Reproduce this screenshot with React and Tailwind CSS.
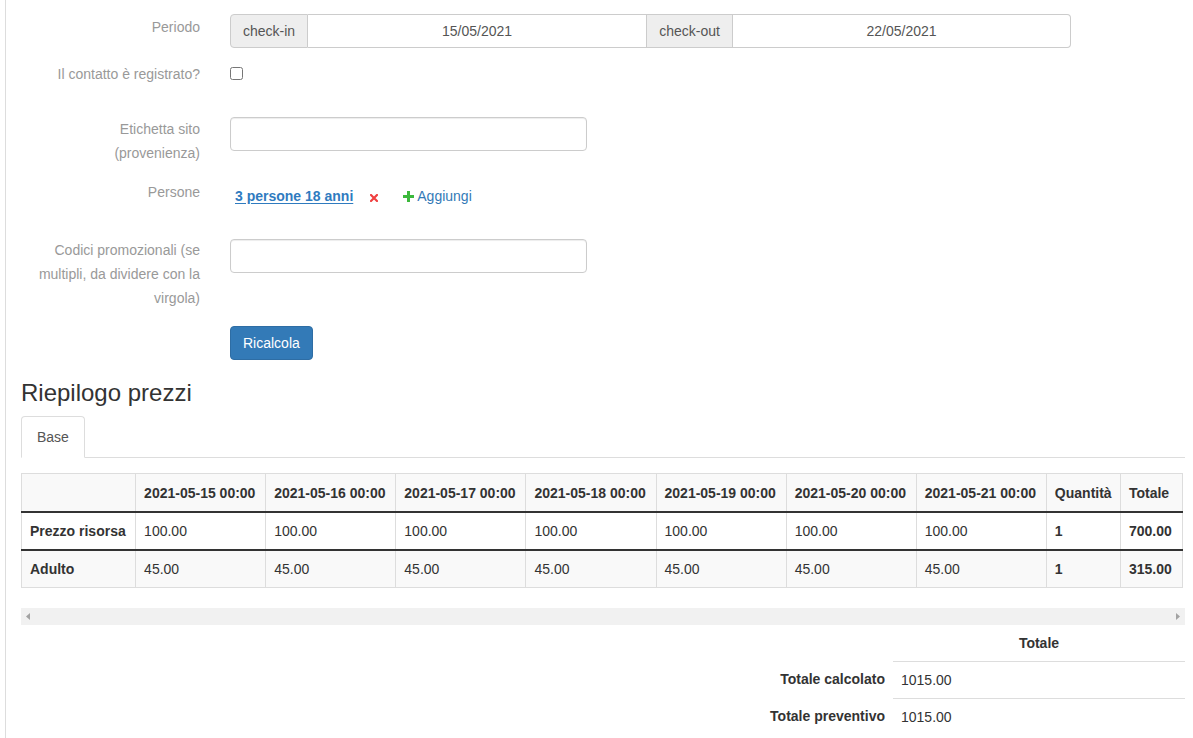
import React from 'react';

const font = { fontFamily: '"Liberation Sans", Arial, sans-serif' };

const dates = [
  '2021-05-15 00:00',
  '2021-05-16 00:00',
  '2021-05-17 00:00',
  '2021-05-18 00:00',
  '2021-05-19 00:00',
  '2021-05-20 00:00',
  '2021-05-21 00:00',
];

const rows = [
  { name: 'Prezzo risorsa', price: '100.00', qty: '1', total: '700.00' },
  { name: 'Adulto', price: '45.00', qty: '1', total: '315.00' },
];

const FormRow = ({ label, className = '', children }) => (
  <div className={`flex ${className}`}>
    <label className="w-[169px] shrink-0 text-right text-[#999] leading-6">{label}</label>
    <div className="ml-[30px] flex-1">{children}</div>
  </div>
);

const TextInput = () => (
  <input
    type="text"
    className="block w-[357px] h-[34px] border border-[#ccc] rounded-[4px] px-3 shadow-[inset_0_1px_1px_rgba(0,0,0,0.075)] outline-none"
  />
);

const App = () => {
  return (
    <div className="ml-[5px] border-l border-[#ddd] min-h-screen text-[14px] text-[#333] bg-white" style={font}>
      {/* form */}
      <div className="pl-[25px] pt-[15px]">
        <FormRow label="Periodo">
          <div className="flex h-[34px] -mt-px text-[#555]">
            <span className="w-[78px] flex items-center justify-center bg-[#eee] border border-[#ccc] rounded-l-[4px]">check-in</span>
            <span className="w-[338px] flex items-center justify-center border-y border-[#ccc]">15/05/2021</span>
            <span className="w-[87px] flex items-center justify-center bg-[#eee] border border-[#ccc]">check-out</span>
            <span className="w-[338px] flex items-center justify-center border border-l-0 border-[#ccc] rounded-r-[4px]">22/05/2021</span>
          </div>
        </FormRow>

        <FormRow label="Il contatto è registrato?" className="mt-[14px] h-[40px]">
          <input type="checkbox" className="mt-[5px] w-[13px] h-[13px] m-0" />
        </FormRow>

        <FormRow label="Etichetta sito (provenienza)" className="mt-[15px]">
          <TextInput />
        </FormRow>

        <FormRow label="Persone" className="mt-[15px] h-[43px]">
          <div className="flex items-center pt-[4px] leading-6">
            <a href="#" className="ml-[5px] font-bold text-[#2f7bbf] underline underline-offset-2">3 persone 18 anni</a>
            <svg width="8" height="8" viewBox="0 0 8 8" className="ml-[17px] mt-[3px]">
              <path d="M1 1 L7 7 M7 1 L1 7" stroke="#f04040" strokeWidth="2.2" strokeLinecap="square" />
            </svg>
            <svg width="11" height="11" viewBox="0 0 11 11" className="ml-[25px]">
              <path d="M5.5 0 V11 M0 5.5 H11" stroke="#3cb83c" strokeWidth="3" />
            </svg>
            <span className="ml-[3px] text-[#337ab7]">Aggiungi</span>
          </div>
        </FormRow>

        <FormRow label="Codici promozionali (se multipli, da dividere con la virgola)" className="mt-[15px]">
          <div className="pt-px">
            <TextInput />
          </div>
        </FormRow>

        <FormRow label="" className="mt-[16px]">
          <button className="h-[34px] px-3 bg-[#337ab7] border border-[#2e6da4] rounded-[4px] text-white">Ricalcola</button>
        </FormRow>
      </div>

      {/* summary */}
      <div className="pl-[15px] pr-[8px]">
        <h3 className="mt-[20px] mb-[10px] text-[24px] leading-[26px] text-[#333]">Riepilogo prezzi</h3>

        <div className="flex border-b border-[#ddd]">
          <div className="-mb-px px-[15px] h-[42px] flex items-center bg-white border border-[#ddd] border-b-white rounded-t-[4px] text-[#555]">
            Base
          </div>
        </div>

        <div className="mt-[15px]">
          <table className="table-fixed w-[1162px] border-collapse whitespace-nowrap border border-[#ddd]">
            <thead>
              <tr className="bg-[#f9f9f9]">
                <th className="w-[114px] border border-[#ddd] border-b-2 border-b-[#333] px-2 pt-[9px] pb-2 leading-5 text-left"></th>
                {dates.map((d) => (
                  <th key={d} className="w-[130px] border border-[#ddd] border-b-2 border-b-[#333] px-2 pt-[9px] pb-2 leading-5 text-left font-bold">{d}</th>
                ))}
                <th className="w-[74px] border border-[#ddd] border-b-2 border-b-[#333] px-2 pt-[9px] pb-2 leading-5 text-left font-bold">Quantità</th>
                <th className="w-[62px] border border-[#ddd] border-b-2 border-b-[#333] px-2 pt-[9px] pb-2 leading-5 text-left font-bold">Totale</th>
              </tr>
            </thead>
            <tbody>
              {rows.map((r, i) => (
                <tr key={r.name} className={i % 2 === 1 ? 'bg-[#f9f9f9]' : 'bg-white'}>
                  <td className={`border border-[#ddd] px-2 py-2 leading-5 font-bold ${i === 0 ? 'border-b-2 border-b-[#333]' : ''}`}>{r.name}</td>
                  {dates.map((d) => (
                    <td key={d} className={`border border-[#ddd] px-2 py-2 leading-5 ${i === 0 ? 'border-b-2 border-b-[#333]' : ''}`}>{r.price}</td>
                  ))}
                  <td className={`border border-[#ddd] px-2 py-2 leading-5 font-bold ${i === 0 ? 'border-b-2 border-b-[#333]' : ''}`}>{r.qty}</td>
                  <td className={`border border-[#ddd] px-2 py-2 leading-5 font-bold ${i === 0 ? 'border-b-2 border-b-[#333]' : ''}`}>{r.total}</td>
                </tr>
              ))}
            </tbody>
          </table>

          {/* horizontal scrollbar */}
          <div className="mt-[20px] h-[17px] bg-[#f1f1f1] flex items-center justify-between px-[5px]">
            <svg width="4" height="7" viewBox="0 0 4 7"><path d="M4 0 L0 3.5 L4 7 Z" fill="#a3a3a3" /></svg>
            <svg width="4" height="7" viewBox="0 0 4 7"><path d="M0 0 L4 3.5 L0 7 Z" fill="#a3a3a3" /></svg>
          </div>
        </div>

        {/* totals */}
        <div className="text-[14px]">
          <div className="flex">
            <div className="flex-1"></div>
            <div className="w-[292px] py-2 leading-5 text-center font-bold">Totale</div>
          </div>
          <div className="flex">
            <div className="flex-1 px-2 py-2 leading-5 text-right font-bold">Totale calcolato</div>
            <div className="w-[292px] border-t border-[#ddd] px-2 py-2 leading-5">1015.00</div>
          </div>
          <div className="flex">
            <div className="flex-1 px-2 py-2 leading-5 text-right font-bold">Totale preventivo</div>
            <div className="w-[292px] border-t border-[#ddd] px-2 py-2 leading-5">1015.00</div>
          </div>
        </div>
      </div>
    </div>
  );
};

export default App;
